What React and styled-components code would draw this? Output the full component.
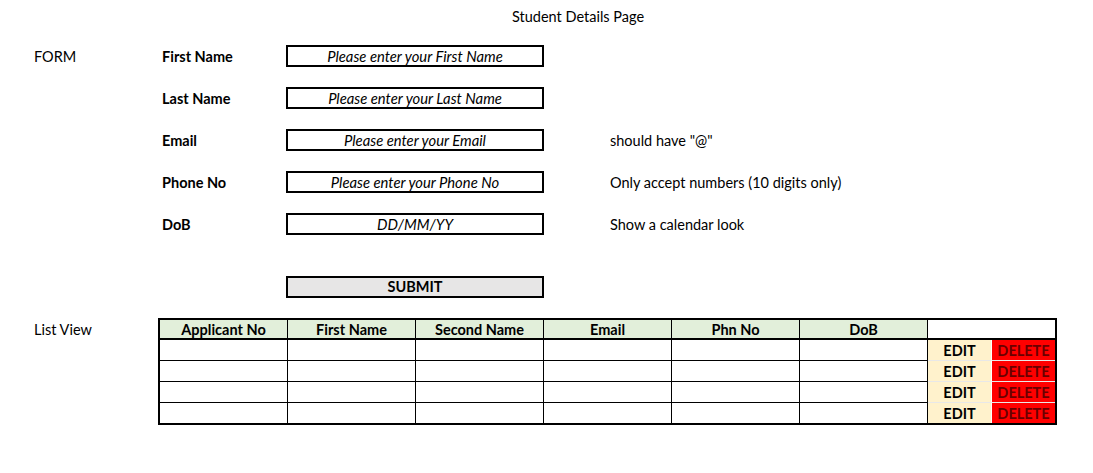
import React from 'react';
import styled, { createGlobalStyle } from 'styled-components';

const GlobalStyle = createGlobalStyle`
    body {
        margin: 0;
        background: #ffffff;
        font-family: Lato, "Open Sans", sans-serif;
        font-size: 14.5px;
        color: #000000;
    }
`;

const Sheet = styled.div`
    width: 1093px;
    height: 473px;
    padding: 6px 0 0 31px;
    box-sizing: border-box;
`;

const Title = styled.div`
    height: 21px;
    line-height: 21px;
    padding-left: 481px;
    margin-bottom: 18px;
`;

const FormRow = styled.div`
    display: grid;
    grid-template-columns: 128px 128px 256px 1fr;
    align-items: center;
    height: 22px;
    margin-bottom: ${(p) => p.$after || 20}px;
`;

const SideLabel = styled.div`
    padding-left: 3px;
`;

const FieldLabel = styled.div`
    padding-left: 3px;
    font-weight: 700;
`;

const InputBox = styled.div`
    margin-left: -1px;
    width: 258px;
    height: 22px;
    box-sizing: border-box;
    border: 2px solid #000;
    background: ${(p) => (p.$button ? '#e7e6e6' : '#fff')};
    display: flex;
    align-items: center;
    justify-content: center;
    font-style: ${(p) => (p.$button ? 'normal' : 'italic')};
    font-weight: ${(p) => (p.$button ? 700 : 400)};
    font-size: ${(p) => (p.$button ? '14.5px' : '14.8px')};
    line-height: 18px;
`;

const Note = styled.div`
    padding-left: 67px;
`;

const ListSection = styled.div`
    display: grid;
    grid-template-columns: 127px auto;
    align-items: start;
`;

const ListLabel = styled.div`
    padding-left: 3px;
    height: 21px;
    line-height: 23px;
`;

const Table = styled.div`
    display: grid;
    grid-template-columns: repeat(6, 128px) 64px 63px;
    width: max-content;
    border: 2px solid #000;
`;

const HeadCell = styled.div`
    height: 18px;
    line-height: 19px;
    background: ${(p) => (p.$blank ? '#fff' : '#e2efda')};
    grid-column: ${(p) => (p.$span ? `span ${p.$span}` : 'auto')};
    border-right: ${(p) => (p.$last ? 'none' : '1px solid #000')};
    border-bottom: 2px solid #000;
    text-align: center;
    font-weight: 700;
`;

const Cell = styled.div`
    height: 20px;
    border-right: 1px solid #000;
    border-bottom: ${(p) => (p.$last ? 'none' : '1px solid #000')};
`;

const ActionCell = styled.div`
    height: 20px;
    line-height: 21px;
    text-align: center;
    font-weight: 700;
    background: ${(p) => (p.$danger ? '#ff0000' : '#fff2cc')};
    color: ${(p) => (p.$danger ? '#6a0000' : '#000')};
    border-right: ${(p) => (p.$danger ? 'none' : '1px solid #fff')};
    border-bottom: ${(p) => (p.$last ? 'none' : '1px solid #e8e8e8')};
`;

const fields = [
    { label: 'First Name', hint: 'Please enter your First Name' },
    { label: 'Last Name', hint: 'Please enter your Last Name' },
    { label: 'Email', hint: 'Please enter your Email', note: 'should have "@"' },
    { label: 'Phone No', hint: 'Please enter your Phone No', note: 'Only accept numbers (10 digits only)' },
    { label: 'DoB', hint: 'DD/MM/YY', note: 'Show a calendar look' },
];

const columns = ['Applicant No', 'First Name', 'Second Name', 'Email', 'Phn No', 'DoB'];
const rows = [0, 1, 2, 3];

const App = () => {
    return (
        <Sheet>
            <GlobalStyle />
            <Title>Student Details Page</Title>

            {fields.map((f, i) => (
                <FormRow key={f.label} $after={i === fields.length - 1 ? 41 : 20}>
                    <SideLabel>{i === 0 ? 'FORM' : ''}</SideLabel>
                    <FieldLabel>{f.label}</FieldLabel>
                    <InputBox>{f.hint}</InputBox>
                    <Note>{f.note}</Note>
                </FormRow>
            ))}

            <FormRow $after={20}>
                <div />
                <div />
                <InputBox $button>SUBMIT</InputBox>
                <div />
            </FormRow>

            <ListSection>
                <ListLabel>List View</ListLabel>
                <Table>
                    {columns.map((c) => (
                        <HeadCell key={c}>{c}</HeadCell>
                    ))}
                    <HeadCell $blank $span={2} $last />
                    {rows.map((r) => (
                        <React.Fragment key={r}>
                            {columns.map((c) => (
                                <Cell key={c} $last={r === rows.length - 1} />
                            ))}
                            <ActionCell $last={r === rows.length - 1}>EDIT</ActionCell>
                            <ActionCell $danger $last={r === rows.length - 1}>DELETE</ActionCell>
                        </React.Fragment>
                    ))}
                </Table>
            </ListSection>
        </Sheet>
    );
};

export default App;
